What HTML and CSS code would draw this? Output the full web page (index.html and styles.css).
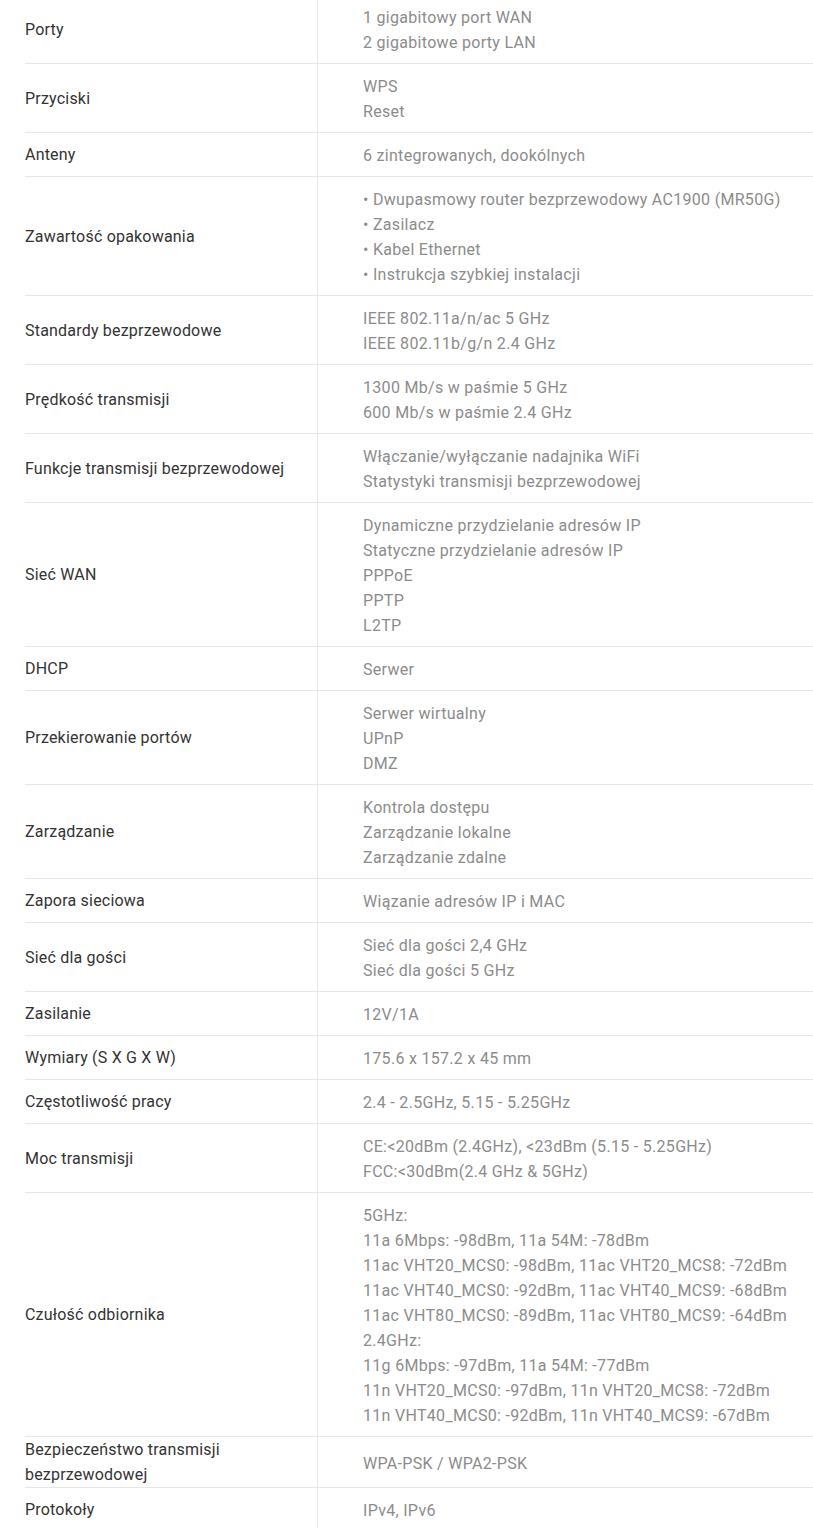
FILE: index.html
```html
<!DOCTYPE html>
<html lang="pl">
<head>
<meta charset="utf-8">
<title>Specyfikacja</title>
<link rel="stylesheet" href="styles.css">
</head>
<body>
<div class="specs">
  <div class="row"><div class="label">Porty</div><div class="value"><div>1 gigabitowy port WAN</div><div>2 gigabitowe porty LAN</div></div></div>
  <div class="row"><div class="label">Przyciski</div><div class="value"><div>WPS</div><div>Reset</div></div></div>
  <div class="row"><div class="label">Anteny</div><div class="value"><div>6 zintegrowanych, dookólnych</div></div></div>
  <div class="row"><div class="label">Zawartość opakowania</div><div class="value"><div>• Dwupasmowy router bezprzewodowy AC1900 (MR50G)</div><div>• Zasilacz</div><div>• Kabel Ethernet</div><div>• Instrukcja szybkiej instalacji</div></div></div>
  <div class="row"><div class="label">Standardy bezprzewodowe</div><div class="value"><div>IEEE 802.11a/n/ac 5 GHz</div><div>IEEE 802.11b/g/n 2.4 GHz</div></div></div>
  <div class="row"><div class="label">Prędkość transmisji</div><div class="value"><div>1300 Mb/s w paśmie 5 GHz</div><div>600 Mb/s w paśmie 2.4 GHz</div></div></div>
  <div class="row"><div class="label">Funkcje transmisji bezprzewodowej</div><div class="value"><div>Włączanie/wyłączanie nadajnika WiFi</div><div>Statystyki transmisji bezprzewodowej</div></div></div>
  <div class="row"><div class="label">Sieć WAN</div><div class="value"><div>Dynamiczne przydzielanie adresów IP</div><div>Statyczne przydzielanie adresów IP</div><div>PPPoE</div><div>PPTP</div><div>L2TP</div></div></div>
  <div class="row"><div class="label">DHCP</div><div class="value"><div>Serwer</div></div></div>
  <div class="row"><div class="label">Przekierowanie portów</div><div class="value"><div>Serwer wirtualny</div><div>UPnP</div><div>DMZ</div></div></div>
  <div class="row"><div class="label">Zarządzanie</div><div class="value"><div>Kontrola dostępu</div><div>Zarządzanie lokalne</div><div>Zarządzanie zdalne</div></div></div>
  <div class="row"><div class="label">Zapora sieciowa</div><div class="value"><div>Wiązanie adresów IP i MAC</div></div></div>
  <div class="row"><div class="label">Sieć dla gości</div><div class="value"><div>Sieć dla gości 2,4 GHz</div><div>Sieć dla gości 5 GHz</div></div></div>
  <div class="row"><div class="label">Zasilanie</div><div class="value"><div>12V/1A</div></div></div>
  <div class="row"><div class="label">Wymiary (S X G X W)</div><div class="value"><div>175.6 x 157.2 x 45 mm</div></div></div>
  <div class="row"><div class="label">Częstotliwość pracy</div><div class="value"><div>2.4 - 2.5GHz, 5.15 - 5.25GHz</div></div></div>
  <div class="row"><div class="label">Moc transmisji</div><div class="value"><div>CE:&lt;20dBm (2.4GHz), &lt;23dBm (5.15 - 5.25GHz)</div><div>FCC:&lt;30dBm(2.4 GHz &amp; 5GHz)</div></div></div>
  <div class="row"><div class="label">Czułość odbiornika</div><div class="value"><div>5GHz:</div><div>11a 6Mbps: -98dBm, 11a 54M: -78dBm</div><div>11ac VHT20_MCS0: -98dBm, 11ac VHT20_MCS8: -72dBm</div><div>11ac VHT40_MCS0: -92dBm, 11ac VHT40_MCS9: -68dBm</div><div>11ac VHT80_MCS0: -89dBm, 11ac VHT80_MCS9: -64dBm</div><div>2.4GHz:</div><div>11g 6Mbps: -97dBm, 11a 54M: -77dBm</div><div>11n VHT20_MCS0: -97dBm, 11n VHT20_MCS8: -72dBm</div><div>11n VHT40_MCS0: -92dBm, 11n VHT40_MCS9: -67dBm</div></div></div>
  <div class="row"><div class="label">Bezpieczeństwo transmisji bezprzewodowej</div><div class="value"><div>WPA-PSK / WPA2-PSK</div></div></div>
  <div class="row"><div class="label">Protokoły</div><div class="value"><div>IPv4, IPv6</div></div></div>
</div>
</body>
</html>
```
FILE: styles.css
```css
html, body {
  margin: 0;
  padding: 0;
  background: #fff;
}
body {
  font-family: Roboto, "Liberation Sans", Arial, sans-serif;
  font-size: 16px;
  line-height: 25px;
  letter-spacing: 0.3px;
}
.specs {
  margin: -5px 0 0 25px;
}
.row {
  display: flex;
  align-items: center;
  border-bottom: 1px solid #e6e6e6;
}
.label {
  width: 292px;
  flex: none;
  color: #333;
  letter-spacing: 0.2px;
}
.value {
  flex: 1;
  align-self: stretch;
  display: flex;
  flex-direction: column;
  justify-content: center;
  border-left: 1px solid #e6e6e6;
  padding: 10px 0 8px 45px;
  color: #8c8c8c;
}
```
